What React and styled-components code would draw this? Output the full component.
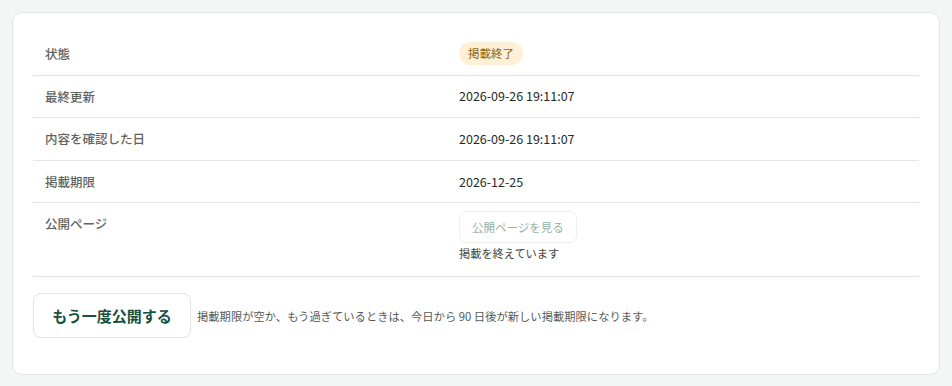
import React from 'react';
import styled, { createGlobalStyle } from 'styled-components';

const GlobalStyle = createGlobalStyle`
  html, body {
    margin: 0;
    padding: 0;
    background: #f4f6f5;
  }
  body {
    font-family: "Noto Sans CJK JP", "Noto Sans", sans-serif;
    color: #222;
  }
`;

const Page = styled.div`
  padding: 12px;
`;

const Card = styled.section`
  background: #fff;
  border: 1px solid #e2e5e3;
  border-radius: 10px;
  padding: 20px 20px 36px;
`;

const Table = styled.div`
  display: flex;
  flex-direction: column;
`;

const Row = styled.div`
  display: grid;
  grid-template-columns: 426px 1fr;
  min-height: 41.6px;
  align-items: ${(p) => (p.$top ? 'start' : 'center')};
  border-bottom: 1px solid #e3e5e4;
`;

const Label = styled.div`
  padding: ${(p) => (p.$top ? '10px 12px 0' : '0 12px')};
  font-size: 12.5px;
  line-height: 21px;
  font-weight: 500;
  color: #5f6461;
`;

const Value = styled.div`
  padding: ${(p) => (p.$top ? '8px 0 13px' : '0')};
  font-size: 12.5px;
  line-height: 20px;
  color: #262a28;
  display: flex;
  flex-direction: column;
  align-items: flex-start;
`;

const Badge = styled.span`
  display: inline-block;
  background: #fdf0d6;
  color: #8a6514;
  font-size: 11.5px;
  line-height: 23px;
  padding: 0 9px;
  border-radius: 12px;
`;

const GhostButton = styled.button`
  font-family: inherit;
  font-size: 11.5px;
  height: 32px;
  padding: 0 12px;
  background: #fff;
  color: #94b3a5;
  border: 1px solid #eef0ef;
  border-radius: 7px;
  cursor: not-allowed;
`;

const Note = styled.div`
  font-size: 11.2px;
  line-height: 20px;
  color: #3f4341;
`;

const Actions = styled.div`
  display: flex;
  align-items: center;
  gap: 6px;
  margin-top: 16px;
`;

const PrimaryButton = styled.button`
  font-family: inherit;
  height: 45px;
  width: 158px;
  background: #fff;
  border: 1px solid #dfe3e1;
  border-radius: 8px;
  font-size: 15px;
  font-weight: 700;
  color: #19513f;
  cursor: pointer;
`;

const Hint = styled.span`
  font-size: 11.3px;
  color: #555a57;
`;

const rows = [
  { label: '状態', value: <Badge>掲載終了</Badge> },
  { label: '最終更新', value: '2026-09-26 19:11:07' },
  { label: '内容を確認した日', value: '2026-09-26 19:11:07' },
  { label: '掲載期限', value: '2026-12-25' },
];

export default function App() {
  return (
    <>
      <GlobalStyle />
      <Page>
        <Card>
          <Table>
            {rows.map((r) => (
              <Row key={r.label}>
                <Label>{r.label}</Label>
                <Value>{r.value}</Value>
              </Row>
            ))}
            <Row $top>
              <Label $top>公開ページ</Label>
              <Value $top>
                <GhostButton disabled>公開ページを見る</GhostButton>
                <Note>掲載を終えています</Note>
              </Value>
            </Row>
          </Table>
          <Actions>
            <PrimaryButton>もう一度公開する</PrimaryButton>
            <Hint>掲載期限が空か、もう過ぎているときは、今日から 90 日後が新しい掲載期限になります。</Hint>
          </Actions>
        </Card>
      </Page>
    </>
  );
}
